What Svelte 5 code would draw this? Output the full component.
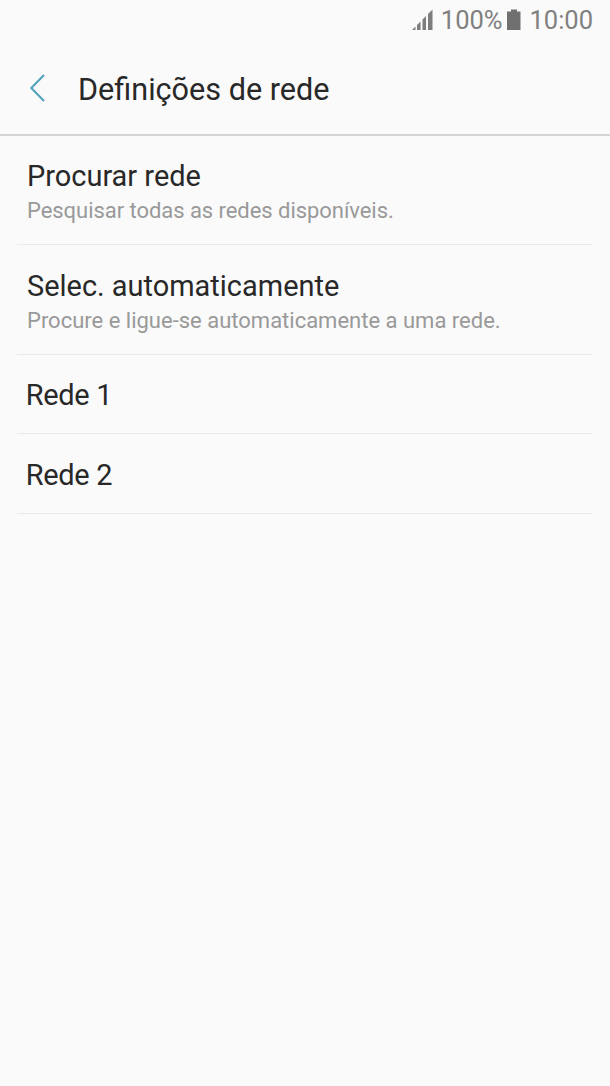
<script>
  const items = [
    { title: 'Procurar rede', detail: 'Pesquisar todas as redes disponíveis.' },
    { title: 'Selec. automaticamente', detail: 'Procure e ligue-se automaticamente a uma rede.' },
    { title: 'Rede 1' },
    { title: 'Rede 2' }
  ];
</script>

<div class="screen">
  <div class="status">
    <svg class="signal" width="21" height="22" viewBox="0 0 21 22" fill="#7d7d7d">
      <path d="M0 21l3.500-3.500V21zM5 21v-5l3.500-3.500V21zM10.500 21V10.500L14 7v14zM16 21V5l4.500-4.500V21z" />
    </svg>
    <span class="percent">100%</span>
    <svg class="battery" width="15" height="22" viewBox="0 0 15 22" fill="#707070">
      <path d="M5 .500h6v2h3.500V21H1V2.500h4z" />
    </svg>
    <span class="time">10:00</span>
  </div>
  <header>
    <svg class="back" width="18" height="28" viewBox="0 0 18 28" fill="none" stroke="#51a3be" stroke-width="2.100">
      <path d="M15 1 2.300 14 15 27" />
    </svg>
    <h1>Definições de rede</h1>
  </header>
  <main>
    {#each items as item}
      <div class="row" class:single={!item.detail}>
        <div class="title">{item.title}</div>
        {#if item.detail}<div class="detail">{item.detail}</div>{/if}
      </div>
    {/each}
  </main>
</div>

<style>
  :global(body) { background: #fafafa; }
  .screen { min-height: 1086px; background: #fafafa; font-family: Roboto, sans-serif; color: #282828; }
  .status { height: 40px; display: flex; align-items: center; justify-content: flex-end; padding-right: 17px; box-sizing: border-box; color: #808080; font-size: 25.500px; }
  .signal { margin-right: 8px; }
  .battery { margin: 0 8px 0 4px; }
  header { height: 96px; box-sizing: border-box; border-bottom: 2px solid #d5d5d5; display: flex; align-items: center; padding: 5px 0 0 29px; }
  .back { margin-bottom: 3px; }
  h1 { margin: 0 0 0 31px; font-size: 30.600px; line-height: 36px; font-weight: 400; }
  main { padding: 0 18px 0 17px; }
  .row { height: 109.300px; box-sizing: border-box; border-bottom: 1px solid #e9e9e9; padding: 22.300px 0 0 10px; }
  .single { height: 79.700px; padding-left: 8.700px; }
  .title { font-size: 28.950px; line-height: 36px; white-space: nowrap; }
  .single .title { letter-spacing: -0.300px; }
  .detail { color: #999; font-size: 22px; line-height: 28px; margin-top: 3px; white-space: nowrap; }
  .row:first-child .detail { letter-spacing: -0.050px; }
</style>
